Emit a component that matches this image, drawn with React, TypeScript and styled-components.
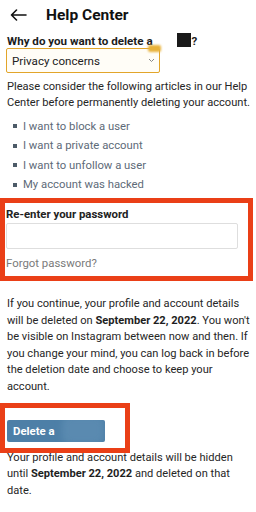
import React from "react";
import styled, { createGlobalStyle } from "styled-components";

const Global = createGlobalStyle`
  html, body { margin: 0; padding: 0; background: #ffffff; }
  body { font-family: Roboto, "Noto Sans", "Liberation Sans", sans-serif; color: #262626; }
  * { box-sizing: border-box; }
`;

const Page = styled.div`
  width: 256px;
  height: 512px;
  overflow: hidden;
  display: flex;
  flex-direction: column;
  background: #fff;
`;

const Header = styled.header`
  height: 34px;
  display: flex;
  align-items: center;
  padding: 0 0 5px 10px;
  gap: 19px;
`;

const Title = styled.h1`
  margin: 0;
  font-size: 15.5px;
  font-weight: 700;
  color: #111;
  font-family: Roboto, "Noto Sans", sans-serif;
`;

const Content = styled.main`
  display: flex;
  flex-direction: column;
  padding: 0 0 0 7px;
`;

const Question = styled.div`
  display: flex;
  align-items: center;
  font-size: 11.6px;
  font-weight: 700;
  height: 14px;
  color: #1c1c1c;
`;

const Redact = styled.span`
  display: inline-block;
  width: 14px;
  height: 14px;
  background: #1a1a1a;
  filter: blur(0.6px);
  margin: -2px 1px 0 24px;
`;

const SelectWrap = styled.div`
  position: relative;
  width: 154px;
  height: 25px;
  margin-left: -1px;
  border: 1.5px solid #e2a52a;
  border-radius: 2px;
  background: #fffdf7;
  display: flex;
  align-items: center;
  justify-content: space-between;
  padding: 0 4px 0 5px;
  font-size: 11.6px;
  color: #222;
`;

const Smudge = styled.span`
  position: absolute;
  right: -2px;
  top: -4px;
  width: 13px;
  height: 7px;
  background: #e8b23a;
  filter: blur(1px);
  border-radius: 2px;
`;

const Para = styled.p<{ $mt?: number }>`
  margin: ${(p) => p.$mt ?? 0}px 0 0 0;
  font-size: 11.1px;
  line-height: 16.5px;
  color: #262626;
`;

const List = styled.ul`
  list-style: none;
  margin: 4.5px 0 0 0;
  padding: 0 0 0 6px;
  display: flex;
  flex-direction: column;
`;

const Item = styled.li`
  display: flex;
  align-items: center;
  height: 19.5px;
  font-size: 11.3px;
  color: #5d6a78;
  &::before {
    content: "";
    width: 4px;
    height: 4px;
    background: #4d5b68;
    margin-right: 6px;
  }
`;

const PasswordSection = styled.section`
  margin: 4px 0 0 -7px;
  width: 253px;
  height: 83px;
  border: 5px solid #ea3f17;
  padding: 4px 10px 0 1px;
  display: flex;
  flex-direction: column;
`;

const Label = styled.div`
  font-size: 11.4px;
  font-weight: 700;
  color: #222;
  line-height: 14px;
`;

const Input = styled.div`
  margin-top: 1.5px;
  height: 26px;
  border: 1px solid #dedede;
  border-radius: 2px;
  background: #fff;
`;

const Forgot = styled.div`
  margin-top: 7px;
  font-size: 11.4px;
  line-height: 14px;
  color: #7a7a7a;
`;

const ButtonArea = styled.div`
  position: relative;
  margin-top: 25px;
  height: 22px;
`;

const Frame = styled.div`
  position: absolute;
  left: -7px;
  top: -17px;
  width: 130px;
  height: 50px;
  border: 5px solid #ea3f17;
  pointer-events: none;
`;

const DeleteButton = styled.button`
  position: relative;
  width: 98px;
  height: 22px;
  border: none;
  border-radius: 2px;
  background: #4d7fa7;
  color: #fff;
  font-family: inherit;
  font-size: 11.4px;
  font-weight: 700;
  text-align: left;
  padding: 0 0 0 6px;
  overflow: hidden;
`;

const Blur = styled.span`
  position: absolute;
  left: 55px;
  top: -4px;
  width: 42px;
  height: 28px;
  background: #5a8ab0;
  filter: blur(3px);
  border-radius: 8px;
`;

const Bold = styled.b`
  font-weight: 700;
  color: #1e1e1e;
`;

export default function App() {
  return (
    <Page>
      <Global />
      <Header>
        <svg width="17" height="12" viewBox="0 0 17 12" fill="none" stroke="#111" strokeWidth="1.6" strokeLinecap="round" strokeLinejoin="round">
          <path d="M16 6H1.5M6.5 1L1.5 6l5 5" />
        </svg>
        <Title>Help Center</Title>
      </Header>
      <Content>
        <Question>
          Why do you want to delete a<Redact />?
        </Question>
        <SelectWrap>
          <span>Privacy concerns</span>
          <svg width="7" height="5" viewBox="0 0 7 5" fill="none" stroke="#888" strokeWidth="1">
            <path d="M1 1l2.5 2.5L6 1" />
          </svg>
          <Smudge />
        </SelectWrap>
        <Para $mt={5.75}>
          Please consider the following articles in our Help Center before permanently deleting your account.
        </Para>
        <List>
          <Item>I want to block a user</Item>
          <Item>I want a private account</Item>
          <Item>I want to unfollow a user</Item>
          <Item>My account was hacked</Item>
        </List>
        <PasswordSection>
          <Label>Re-enter your password</Label>
          <Input />
          <Forgot>Forgot password?</Forgot>
        </PasswordSection>
        <Para $mt={14.75}>
          If you continue, your profile and account details will be deleted on <Bold>September 22, 2022</Bold>. You won't be visible on Instagram between now and then. If you change your mind, you can log back in before the deletion date and choose to keep your account.
        </Para>
        <ButtonArea>
          <DeleteButton>
            Delete a<Blur />
          </DeleteButton>
          <Frame />
        </ButtonArea>
        <Para $mt={7.75}>
          Your profile and account details will be hidden until <Bold>September 22, 2022</Bold> and deleted on that date.
        </Para>
      </Content>
    </Page>
  );
}
